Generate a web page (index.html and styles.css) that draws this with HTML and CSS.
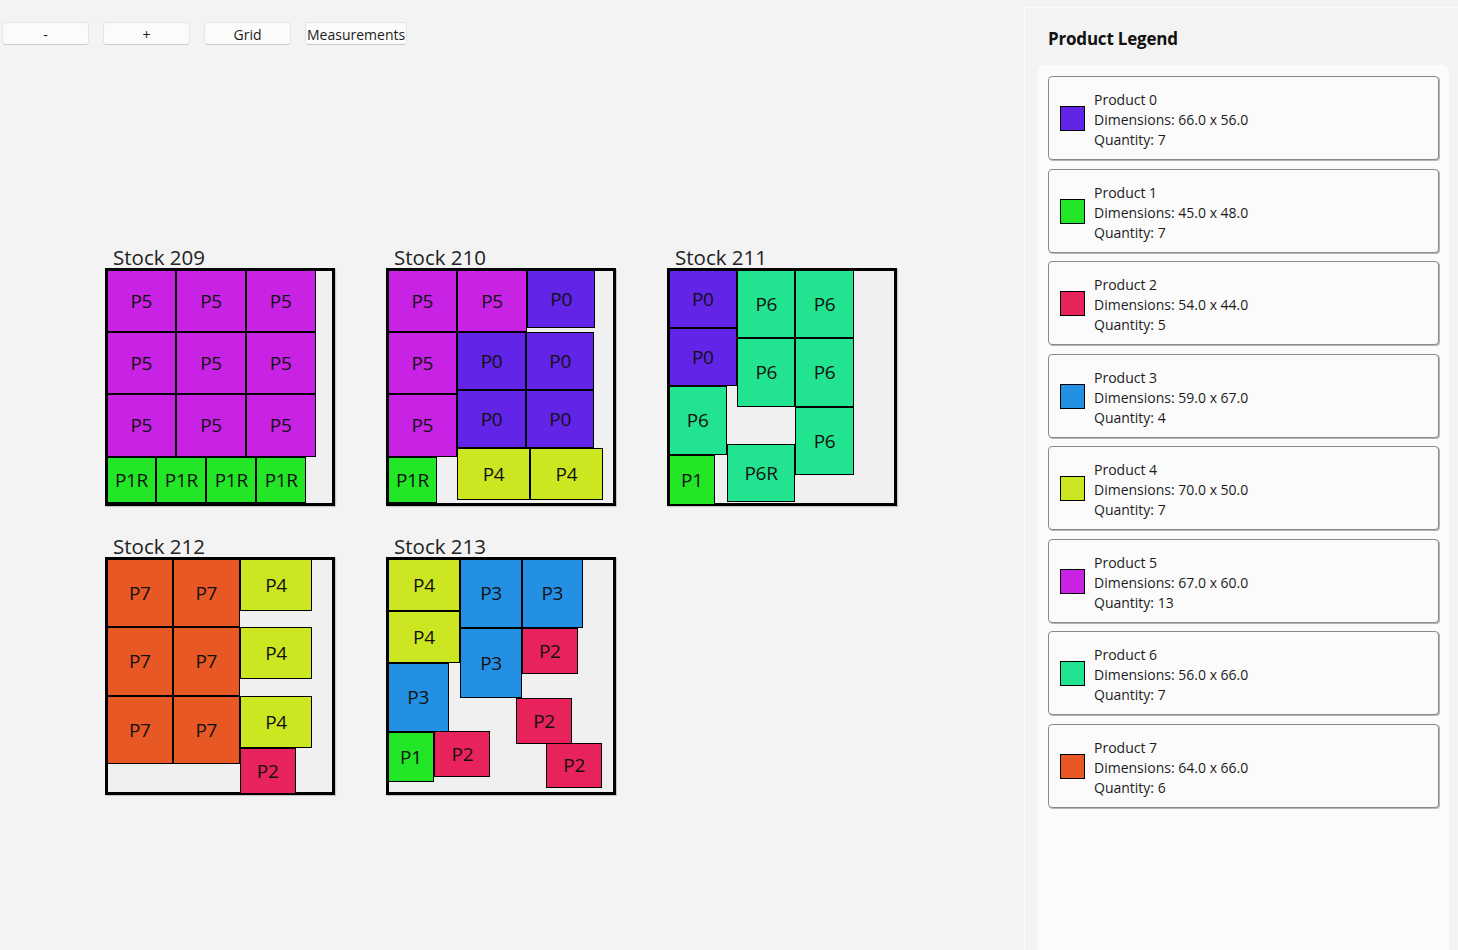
FILE: index.html
```html
<!DOCTYPE html>
<html lang="en">
<head>
<meta charset="utf-8">
<title>Cutting Layout</title>
<link rel="stylesheet" href="styles.css">
</head>
<body>
<div class="app">
  <main class="main">
    <div class="toolbar">
      <button class="btn">-</button>
      <button class="btn">+</button>
      <button class="btn">Grid</button>
      <button class="btn btn-wide">Measurements</button>
    </div>
    <div class="stocks">
      <section class="stock">
        <div class="stock-label">Stock 209</div>
        <div class="sheet">
          <div class="piece p5" style="--x:0;--y:0;--w:67;--h:60">P5</div>
          <div class="piece p5" style="--x:67;--y:0;--w:67;--h:60">P5</div>
          <div class="piece p5" style="--x:134;--y:0;--w:67;--h:60">P5</div>
          <div class="piece p5" style="--x:0;--y:60;--w:67;--h:60">P5</div>
          <div class="piece p5" style="--x:67;--y:60;--w:67;--h:60">P5</div>
          <div class="piece p5" style="--x:134;--y:60;--w:67;--h:60">P5</div>
          <div class="piece p5" style="--x:0;--y:120;--w:67;--h:60">P5</div>
          <div class="piece p5" style="--x:67;--y:120;--w:67;--h:60">P5</div>
          <div class="piece p5" style="--x:134;--y:120;--w:67;--h:60">P5</div>
          <div class="piece p1" style="--x:0;--y:180;--w:48;--h:45">P1R</div>
          <div class="piece p1" style="--x:48;--y:180;--w:48;--h:45">P1R</div>
          <div class="piece p1" style="--x:96;--y:180;--w:48;--h:45">P1R</div>
          <div class="piece p1" style="--x:144;--y:180;--w:48;--h:45">P1R</div>
        </div>
      </section>
      <section class="stock">
        <div class="stock-label">Stock 210</div>
        <div class="sheet">
          <div class="piece p5" style="--x:0;--y:0;--w:67;--h:60">P5</div>
          <div class="piece p5" style="--x:67;--y:0;--w:67;--h:60">P5</div>
          <div class="piece p0" style="--x:134;--y:0;--w:66;--h:56">P0</div>
          <div class="piece p5" style="--x:0;--y:60;--w:67;--h:60">P5</div>
          <div class="piece p0" style="--x:67;--y:60;--w:66;--h:56">P0</div>
          <div class="piece p0" style="--x:133;--y:60;--w:66;--h:56">P0</div>
          <div class="piece p5" style="--x:0;--y:120;--w:67;--h:60">P5</div>
          <div class="piece p0" style="--x:67;--y:116;--w:66;--h:56">P0</div>
          <div class="piece p0" style="--x:133;--y:116;--w:66;--h:56">P0</div>
          <div class="piece p4" style="--x:67;--y:172;--w:70;--h:50">P4</div>
          <div class="piece p4" style="--x:137;--y:172;--w:70;--h:50">P4</div>
          <div class="piece p1" style="--x:0;--y:180;--w:48;--h:45">P1R</div>
        </div>
      </section>
      <section class="stock">
        <div class="stock-label">Stock 211</div>
        <div class="sheet">
          <div class="piece p0" style="--x:0;--y:0;--w:66;--h:56">P0</div>
          <div class="piece p0" style="--x:0;--y:56;--w:66;--h:56">P0</div>
          <div class="piece p6" style="--x:66;--y:0;--w:56;--h:66">P6</div>
          <div class="piece p6" style="--x:122;--y:0;--w:56;--h:66">P6</div>
          <div class="piece p6" style="--x:66;--y:66;--w:56;--h:66">P6</div>
          <div class="piece p6" style="--x:122;--y:66;--w:56;--h:66">P6</div>
          <div class="piece p6" style="--x:0;--y:112;--w:56;--h:66">P6</div>
          <div class="piece p6" style="--x:122;--y:132;--w:56;--h:66">P6</div>
          <div class="piece p1" style="--x:0;--y:178;--w:45;--h:48">P1</div>
          <div class="piece p6" style="--x:56;--y:168;--w:66;--h:56">P6R</div>
        </div>
      </section>
      <section class="stock">
        <div class="stock-label">Stock 212</div>
        <div class="sheet">
          <div class="piece p7" style="--x:0;--y:0;--w:64;--h:66">P7</div>
          <div class="piece p7" style="--x:64;--y:0;--w:64;--h:66">P7</div>
          <div class="piece p4" style="--x:128;--y:0;--w:70;--h:50">P4</div>
          <div class="piece p7" style="--x:0;--y:66;--w:64;--h:66">P7</div>
          <div class="piece p7" style="--x:64;--y:66;--w:64;--h:66">P7</div>
          <div class="piece p4" style="--x:128;--y:66;--w:70;--h:50">P4</div>
          <div class="piece p7" style="--x:0;--y:132;--w:64;--h:66">P7</div>
          <div class="piece p7" style="--x:64;--y:132;--w:64;--h:66">P7</div>
          <div class="piece p4" style="--x:128;--y:132;--w:70;--h:50">P4</div>
          <div class="piece p2" style="--x:128;--y:182;--w:54;--h:44">P2</div>
        </div>
      </section>
      <section class="stock">
        <div class="stock-label">Stock 213</div>
        <div class="sheet">
          <div class="piece p4" style="--x:0;--y:0;--w:70;--h:50">P4</div>
          <div class="piece p4" style="--x:0;--y:50;--w:70;--h:50">P4</div>
          <div class="piece p3" style="--x:70;--y:0;--w:59;--h:67">P3</div>
          <div class="piece p3" style="--x:129;--y:0;--w:59;--h:67">P3</div>
          <div class="piece p3" style="--x:70;--y:67;--w:59;--h:67">P3</div>
          <div class="piece p2" style="--x:129;--y:67;--w:54;--h:44">P2</div>
          <div class="piece p3" style="--x:0;--y:100;--w:59;--h:67">P3</div>
          <div class="piece p2" style="--x:123.5;--y:134;--w:54;--h:44">P2</div>
          <div class="piece p1" style="--x:0;--y:167;--w:45;--h:48">P1</div>
          <div class="piece p2" style="--x:45;--y:166;--w:54;--h:44">P2</div>
          <div class="piece p2" style="--x:152.5;--y:177;--w:54;--h:44">P2</div>
        </div>
      </section>
    </div>
  </main>
  <aside class="panel">
    <h2 class="panel-title">Product Legend</h2>
    <div class="legend">
      <div class="card">
        <span class="swatch p0"></span>
        <div class="card-text"><div>Product 0</div><div>Dimensions: 66.0 x 56.0</div><div>Quantity: 7</div></div>
      </div>
      <div class="card">
        <span class="swatch p1"></span>
        <div class="card-text"><div>Product 1</div><div>Dimensions: 45.0 x 48.0</div><div>Quantity: 7</div></div>
      </div>
      <div class="card">
        <span class="swatch p2"></span>
        <div class="card-text"><div>Product 2</div><div>Dimensions: 54.0 x 44.0</div><div>Quantity: 5</div></div>
      </div>
      <div class="card">
        <span class="swatch p3"></span>
        <div class="card-text"><div>Product 3</div><div>Dimensions: 59.0 x 67.0</div><div>Quantity: 4</div></div>
      </div>
      <div class="card">
        <span class="swatch p4"></span>
        <div class="card-text"><div>Product 4</div><div>Dimensions: 70.0 x 50.0</div><div>Quantity: 7</div></div>
      </div>
      <div class="card">
        <span class="swatch p5"></span>
        <div class="card-text"><div>Product 5</div><div>Dimensions: 67.0 x 60.0</div><div>Quantity: 13</div></div>
      </div>
      <div class="card">
        <span class="swatch p6"></span>
        <div class="card-text"><div>Product 6</div><div>Dimensions: 56.0 x 66.0</div><div>Quantity: 7</div></div>
      </div>
      <div class="card">
        <span class="swatch p7"></span>
        <div class="card-text"><div>Product 7</div><div>Dimensions: 64.0 x 66.0</div><div>Quantity: 6</div></div>
      </div>
    </div>
  </aside>
</div>
</body>
</html>
```
FILE: styles.css
```css
* { box-sizing: border-box; }
html, body {
  margin: 0;
  padding: 0;
  height: 100%;
  overflow: hidden;
}
body {
  background: #f3f3f3;
  font-family: "Open Sans", "Noto Sans", sans-serif;
  color: #1b1b1b;
}
.app {
  display: flex;
  height: 950px;
}
.main {
  width: 1024px;
  flex: none;
  display: flex;
  flex-direction: column;
}
.toolbar {
  display: flex;
  gap: 14px;
  padding: 22px 0 0 2px;
}
.btn {
  height: 23px;
  min-width: 87px;
  padding: 2px 1px 0;
  font-family: inherit;
  font-size: 14px;
  line-height: 20px;
  color: #1b1b1b;
  background: #fbfbfb;
  border: 1px solid #e5e5e5;
  border-bottom-color: #c8c8c8;
  border-radius: 4px;
}
.btn-wide { min-width: 101px; }

.stocks {
  display: grid;
  grid-template-columns: repeat(3, 230px);
  column-gap: 51px;
  row-gap: 27px;
  padding: 199px 0 0 105px;
}
.stock-label {
  font-size: 20.5px;
  line-height: 24px;
  height: 24px;
  padding: 1px 0 0 8px;
  color: #222;
}
.sheet {
  position: relative;
  width: 230px;
  height: 238px;
  border: 3px solid #000;
  background: #f0f0f0;
  box-shadow: 1px 1px 1px rgba(0, 0, 0, 0.18);
}
.piece {
  position: absolute;
  left: calc(var(--x) * 1.04px - 1.5px);
  top: calc(var(--y) * 1.04px - 1.5px);
  width: calc(var(--w) * 1.04px);
  height: calc(var(--h) * 1.04px);
  border: 1px solid #000;
  display: flex;
  align-items: center;
  justify-content: center;
  font-size: 19px;
  color: #111;
  letter-spacing: -0.3px;
}
.p0 { background: #6224e6; }
.p1 { background: #22e626; }
.p2 { background: #e8225a; }
.p3 { background: #2490e4; }
.p4 { background: #cce622; }
.p5 { background: #c822e4; }
.p6 { background: #22e490; }
.p7 { background: #e85824; }

.panel {
  flex: 1;
  margin-top: 7px;
  background: #f3f3f3;
  border-top: 1px solid #fbfbfb;
  border-left: 1px solid #fbfbfb;
  display: flex;
  flex-direction: column;
}
.panel-title {
  margin: 0;
  padding: 19px 0 0 23px;
  font-size: 17px;
  line-height: 24px;
  font-weight: 700;
  color: #111;
  letter-spacing: -0.2px;
}
.legend {
  flex: 1;
  margin: 14px 9px 0 13px;
  padding: 11px 10px 0 10px;
  background: #fbfbfb;
  border-radius: 7px 7px 0 0;
  display: flex;
  flex-direction: column;
  gap: 8.5px;
}
.card {
  height: 84px;
  display: flex;
  align-items: flex-start;
  padding: 13px 12px 0 11px;
  background: #fbfbfb;
  border: 1px solid #8a8a8a;
  border-radius: 4px;
  box-shadow: 1px 1px 0 #b5b5b5;
}
.swatch {
  flex: none;
  width: 25px;
  height: 25px;
  margin-top: 16px;
  border: 1.5px solid #000;
}
.card-text {
  margin-left: 9px;
  font-size: 14px;
  line-height: 20px;
  color: #1b1b1b;
}
```
